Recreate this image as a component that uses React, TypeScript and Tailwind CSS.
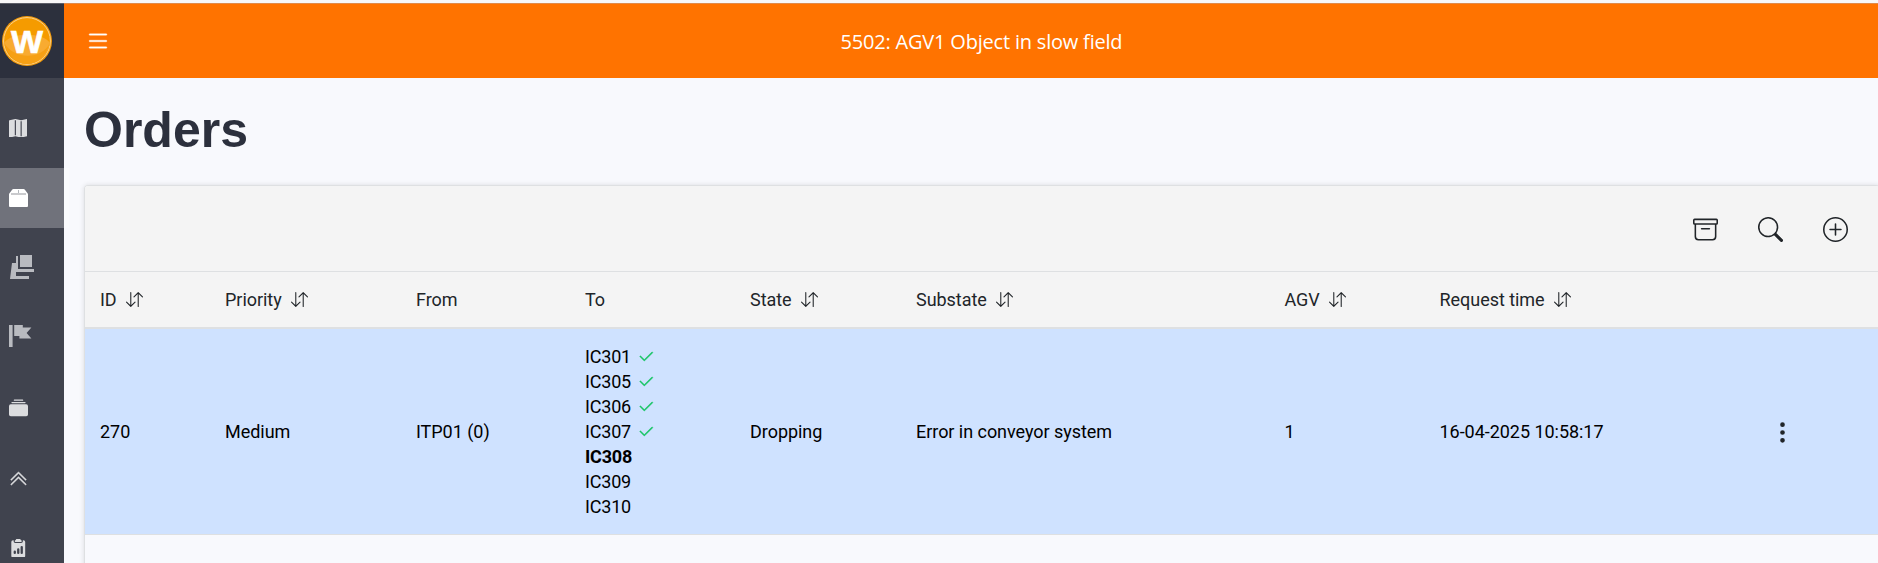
import type { ReactNode } from "react";
import {
  BsArchive,
  BsArrowDownUp,
  BsCheck2,
  BsChevronDoubleUp,
  BsClipboard2DataFill,
  BsCollectionFill,
  BsList,
  BsMapFill,
  BsPlusCircle,
  BsSearch,
  BsThreeDotsVertical,
} from "react-icons/bs";

function Logo() {
  return (
    <svg viewBox="0 0 50 50" className="size-[50px]">
      <circle cx="25" cy="25" r="25" fill="#f39a0a" />
      <circle cx="25" cy="25" r="23.4" fill="#f59b00" stroke="#fbd28b" strokeWidth="1" />
      <path d="M2.2 27 C8 16 42 16 47.8 27 C46 39 37 46 30 47 C14 40 6 36 2.2 27Z" fill="#f8ab31" />
      <path d="M2.2 27 C6 41 15 48 25 48 C35 48 44 41 47.8 27 C40 44 12 44 2.2 27Z" fill="#f6a015" />
      <text
        x="9"
        y="36.6"
        textLength="32"
        lengthAdjust="spacingAndGlyphs"
        fill="#fff"
        stroke="#fff"
        strokeWidth="0.6"
        className="font-['Liberation_Sans',sans-serif] text-[31px] font-bold"
      >
        W
      </text>
    </svg>
  );
}

function BoxIcon() {
  return (
    <svg viewBox="0 0 19 18" className="h-[18px] w-[19px]">
      <path
        d="M4.4 0h10.2c.4 0 .8.2 1.1.6L18.7 4.6c.2.3.3.6.3.9V17a1 1 0 0 1-1 1H1a1 1 0 0 1-1-1V5.500c0-.3.1-.6.3-.9L3.300.6C3.600.2 4 0 4.400 0z"
        fill="currentColor"
      />
      <path d="M2 4h15v2H2z" fill="#c9cacd" />
      <path d="M9 1h1v3H9z" fill="#b4b8bd" />
    </svg>
  );
}

function LoaderIcon() {
  return (
    <svg viewBox="0 0 24 24" className="mb-[2px] ml-[1.5px] h-6 w-6" fill="currentColor">
      <path d="M10 0h12v12H10z" />
      <path d="M6 1h2v13h16v3H6z" />
      <path d="M2 8h4v13h13v3H0z" />
    </svg>
  );
}

function FlagIcon() {
  return (
    <svg viewBox="0 0 23 22" className="mb-[4px] h-[22px] w-[23px]" fill="currentColor">
      <path d="M0 0h3.6v22H0z" />
      <path d="M5.2 0h8.6v2.6H22.4L17.6 8l4.8 5.6H10.4V11H5.2z" />
    </svg>
  );
}

function NavItem({ active, dim, children }: { active?: boolean; dim?: boolean; children: ReactNode }) {
  const tone = active
    ? "bg-[#70727b] text-white shadow-[5px_0_0_rgba(255,255,255,0.3)]"
    : dim
      ? "text-[#b9bbc0]"
      : "text-[#dcdddf]";
  return <a className={`flex h-[60px] shrink-0 items-center pl-[8.5px] ${tone}`}>{children}</a>;
}

const columns = [
  { label: "ID", sort: true, width: "w-[125px]" },
  { label: "Priority", sort: true, width: "w-[191px]" },
  { label: "From", sort: false, width: "w-[169px]" },
  { label: "To", sort: false, width: "w-[165px]" },
  { label: "State", sort: true, width: "w-[166px]" },
  { label: "Substate", sort: true, width: "w-[368.5px]" },
  { label: "AGV", sort: true, width: "w-[155px]" },
  { label: "Request time", sort: true, width: "w-[330px]" },
];

const stops = [
  { name: "IC301", done: true },
  { name: "IC305", done: true },
  { name: "IC306", done: true },
  { name: "IC307", done: true },
  { name: "IC308", current: true },
  { name: "IC309" },
  { name: "IC310" },
];

export default function App() {
  return (
    <div className="flex h-[563px] w-full flex-col overflow-hidden bg-[#f8f9fd] font-[Roboto,sans-serif] text-[18px] leading-[25px] tracking-[-0.04px] text-black">
      <div className="h-[3px] shrink-0 bg-[#f7f7f8]" />
      <div className="flex min-h-0 flex-1">
        <aside className="flex w-16 shrink-0 flex-col bg-[#40434e]">
          <div className="flex h-[75px] shrink-0 items-center border-t border-[#5c5e68] bg-[#2c303d] pl-[2px]">
            <Logo />
          </div>
          <nav className="flex flex-col gap-[10px] pt-5">
            <NavItem><BsMapFill className="size-[18.5px]" /></NavItem>
            <NavItem active><BoxIcon /></NavItem>
            <NavItem dim><LoaderIcon /></NavItem>
            <NavItem dim><FlagIcon /></NavItem>
            <NavItem><BsCollectionFill className="size-[19px]" /></NavItem>
            <NavItem><BsChevronDoubleUp className="size-[19px]" strokeWidth={0.4} /></NavItem>
            <NavItem><BsClipboard2DataFill className="size-[18.5px]" /></NavItem>
          </nav>
        </aside>

        <div className="flex min-w-0 flex-1 flex-col">
          <header className="flex h-[75px] shrink-0 items-center border-t border-[#e08a4a] bg-[#ff7300] pl-[21px] text-white">
            <BsList className="size-[26px]" strokeWidth={0.2} />
            <div className="flex-1 pr-[26px] text-center font-['Open_Sans',sans-serif] text-[20px] tracking-[-0.2px]">
              5502: AGV1 Object in slow field
            </div>
          </header>

          <main className="flex-1 pl-5">
            <h1 className="pt-[27px] font-['Liberation_Sans',sans-serif] text-[50px] leading-[50px] font-bold tracking-normal text-[#2c303d]">
              Orders
            </h1>
            <section className="mt-[30px] w-[1796px] overflow-hidden rounded-t-[4px] border border-b-0 border-[#dee0e2] shadow-[0_0_5px_rgba(0,0,0,0.12)]">
              <div className="flex h-[86px] items-center justify-end gap-10 border-b border-[#dee0e2] bg-[#f4f4f4] pt-[2px] pr-[31px] text-[#212529]">
                <BsArchive className="size-[25px]" />
                <BsSearch className="size-[25px]" />
                <BsPlusCircle className="size-[25px]" />
              </div>
              <div className="flex h-[57px] items-center border-b-2 border-[#dee0e2] bg-[#f4f4f4] pl-[15px] text-[#212529]">
                {columns.map((c) => (
                  <div key={c.label} className={`flex shrink-0 items-center gap-[9px] ${c.width}`}>
                    <span>{c.label}</span>
                    {c.sort && <BsArrowDownUp className="size-[17px]" />}
                  </div>
                ))}
              </div>
              <div className="flex h-[206px] items-center border-b border-[#dee0e2] bg-[#cfe2ff] pl-[15px]">
                <div className="w-[125px] shrink-0">270</div>
                <div className="w-[191px] shrink-0">Medium</div>
                <div className="w-[169px] shrink-0">ITP01 (0)</div>
                <ul className="w-[165px] shrink-0">
                  {stops.map((s) => (
                    <li key={s.name} className={`flex items-center tracking-[-0.2px] ${s.current ? "font-bold" : ""}`}>
                      <span className="w-[52px]">{s.name}</span>
                      {s.done && <BsCheck2 className="size-[18px] text-[#19c565]" strokeWidth={0.4} />}
                    </li>
                  ))}
                </ul>
                <div className="w-[166px] shrink-0">Dropping</div>
                <div className="w-[368.5px] shrink-0">Error in conveyor system</div>
                <div className="w-[155px] shrink-0">1</div>
                <div className="w-[330px] shrink-0">16-04-2025 10:58:17</div>
                <BsThreeDotsVertical className="mt-[2px] size-[25px] text-[#212529]" />
              </div>
              <div className="h-[60px] bg-[#f8f9fd]" />
            </section>
          </main>
        </div>
      </div>
    </div>
  );
}
